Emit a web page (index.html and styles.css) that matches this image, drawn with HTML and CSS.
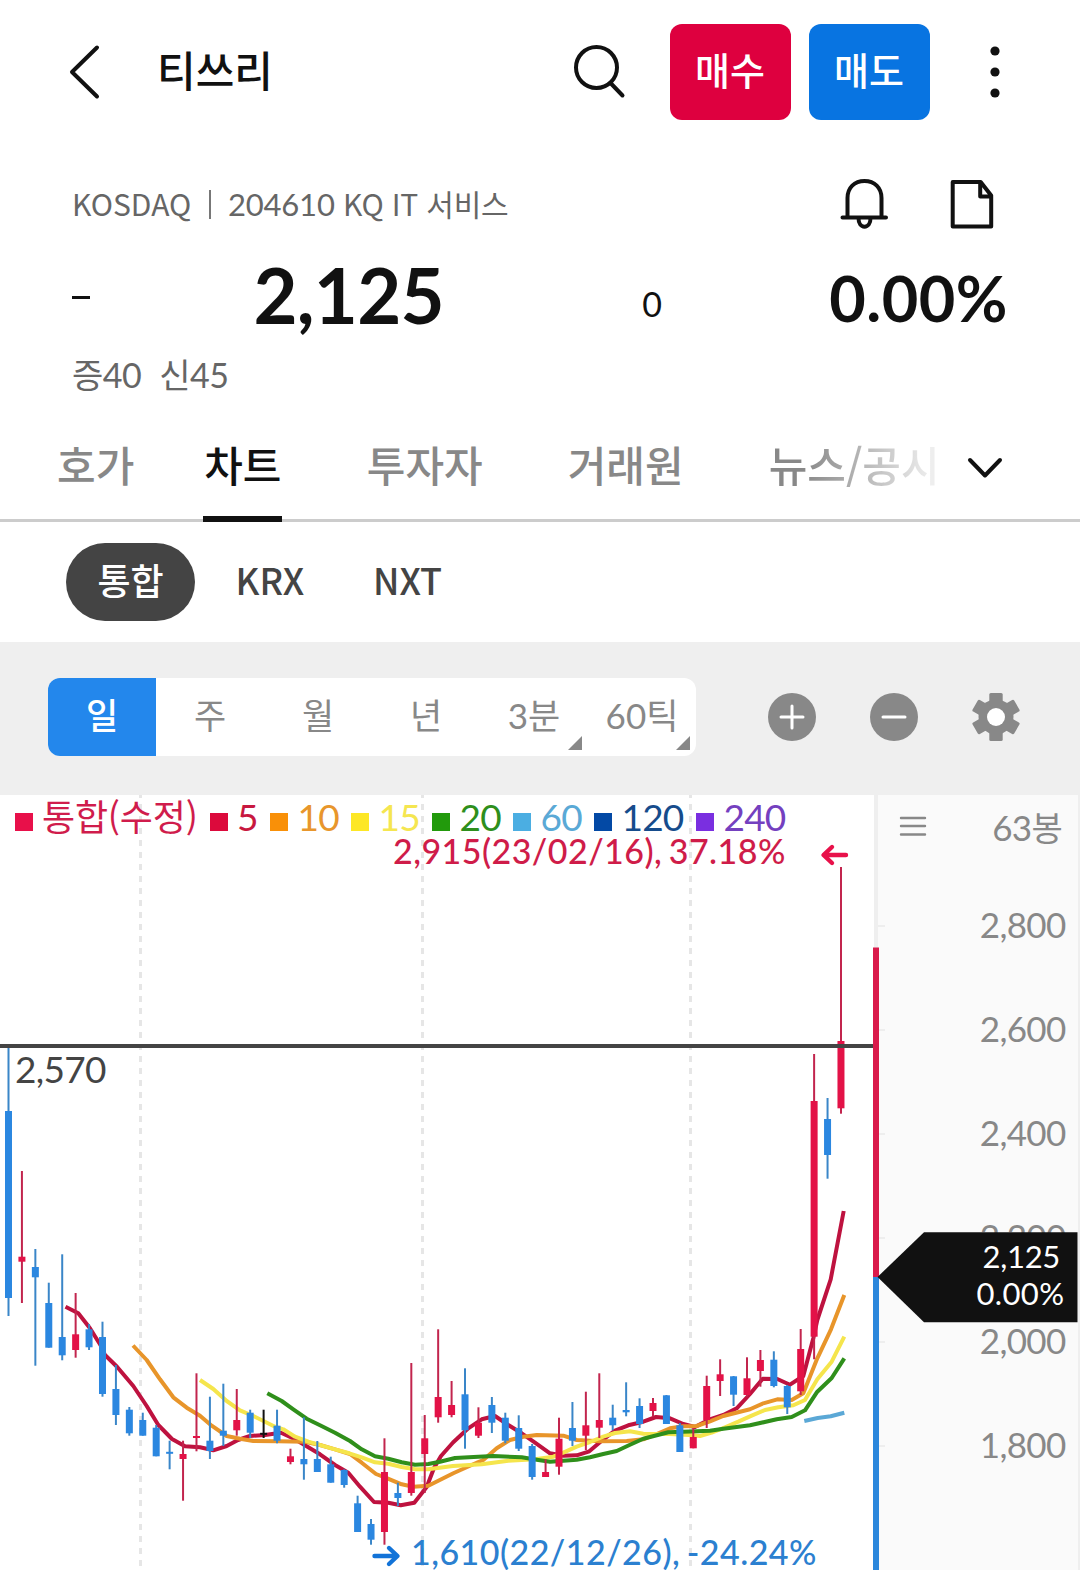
FILE: index.html
```html
<!DOCTYPE html>
<html lang="ko">
    <head>
        <title>티쓰리</title>
        <meta charset="UTF-8">
        <link rel="stylesheet" href="styles.css">
    </head>
    <body>
        <div class="header">
            <svg class="back" width="36" height="60" viewBox="66 42 36 60"><path d="M97 47.5L72 72l25 24.500"/></svg>
            <h1 class="title">티쓰리</h1>
            <svg class="search" width="56" height="60" viewBox="571 42 56 60"><ellipse cx="596.500" cy="67.500" rx="20.500" ry="20.500"/><path d="M610.500 83l12 12.500"/></svg>
            <div class="order buy">매수</div>
            <div class="order sell">매도</div>
            <svg class="more" width="12" height="60" viewBox="0 0 12 60"><circle cx="6" cy="9" r="4.600"/><circle cx="6" cy="30" r="4.600"/><circle cx="6" cy="51" r="4.600"/></svg>
        </div>

        <div class="info">
            <span class="market">KOSDAQ</span>
            <span class="divider"></span>
            <span class="code"><span class="num">204610</span> KQ IT 서비스</span>
            <svg class="bell" width="50" height="54" viewBox="839 177 50 54"><path d="M847.500 217v-19c0-10.500 7-17 17-17s17 6.500 17 17v19M842.500 217.500h43.500M858.500 218c0 5.500 2.500 8.700 6 8.700s6-3.200 6-8.700"/></svg>
            <svg class="doc" width="48" height="54" viewBox="948 177 48 54"><path d="M952.700 182h28l10.500 13.500v31h-38.500zM980.200 182v14.500h11"/></svg>
        </div>

        <div class="price-row">
            <span class="sign"></span>
            <span class="price">2,125</span>
            <span class="diff">0</span>
            <span class="rate">0.00%</span>
        </div>

        <div class="margin-row">
            <span>증<span class="num">40</span></span>
            <span>신<span class="num">45</span></span>
        </div>

        <div class="tabs">
            <div class="tab">호가</div>
            <div class="tab active">차트</div>
            <div class="tab">투자자</div>
            <div class="tab">거래원</div>
            <div class="tab fade">뉴스/공시</div>
            <svg class="expand" width="40" height="26" viewBox="0 0 40 26"><path d="M5 5l15 15.500L35 5"/></svg>
        </div>

        <div class="markets">
            <div class="pill">통합</div>
            <div class="market-item krx">KRX</div>
            <div class="market-item">NXT</div>
        </div>

        <div class="toolbar">
            <div class="periods">
                <div class="period selected">일</div>
                <div class="period">주</div>
                <div class="period">월</div>
                <div class="period">년</div>
                <div class="period more-option"><span class="num">3</span>분</div>
                <div class="period more-option"><span class="num">60</span>틱</div>
            </div>
            <svg class="tool" width="48" height="48" viewBox="0 0 48 48"><circle cx="24" cy="24" r="24"/><path d="M13 24h22M24 13v22"/></svg>
            <svg class="tool" width="48" height="48" viewBox="0 0 48 48"><circle cx="24" cy="24" r="24"/><path d="M13 24h22"/></svg>
            <svg class="tool gear" width="48" height="48" viewBox="-24 -24 48 48">
                <circle r="17.500"/>
                <rect x="-6.700" y="-24" width="13.400" height="48" rx="1.500"/>
                <rect x="-6.700" y="-24" width="13.400" height="48" rx="1.500" transform="rotate(60)"/>
                <rect x="-6.700" y="-24" width="13.400" height="48" rx="1.500" transform="rotate(120)"/>
                <circle class="hole" r="9"/>
            </svg>
        </div>

        <svg class="chart" width="1080" height="775" viewBox="0 795 1080 775">
            <rect class="axis-bg" x="878" y="795" width="202" height="775"/>
            <rect class="axis-line" x="874" y="795" width="4" height="775"/>
            <rect class="axis-line" x="1078" y="795" width="2" height="775"/>
            <path class="grid" d="M140.500 792v780M422.500 792v780M690.500 792v780"/>
            <path class="tick" d="M878 926h7M878 1030h7M878 1134h7M878 1238h7M878 1342h7M878 1446h7"/>

            <g id="averages"></g>
            <g id="candles"></g>

            <rect class="level" x="0" y="1044" width="876" height="4"/>
            <text class="level-text" x="15" y="1083">2,570</text>

            <rect class="range-up" x="873" y="947.500" width="6" height="329.500"/>
            <rect class="range-down" x="873" y="1277" width="6" height="293"/>

            <g class="legend">
                <g class="c-main"><rect x="15" y="813" width="18" height="18"/><text class="kr" x="42" y="831">통합(수정)</text></g>
                <g class="c-5"><rect x="210" y="813" width="18" height="18"/><text x="237" y="831">5</text></g>
                <g class="c-10"><rect x="270" y="813" width="18" height="18"/><text x="297.500" y="831">10</text></g>
                <g class="c-15"><rect x="351" y="813" width="18" height="18"/><text x="378.500" y="831">15</text></g>
                <g class="c-20"><rect x="432" y="813" width="18" height="18"/><text x="459.500" y="831">20</text></g>
                <g class="c-60"><rect x="513" y="813" width="18" height="18"/><text x="540.500" y="831">60</text></g>
                <g class="c-120"><rect x="594" y="813" width="18" height="18"/><text x="621.500" y="831">120</text></g>
                <g class="c-240"><rect x="696" y="813" width="18" height="18"/><text x="723.500" y="831">240</text></g>
            </g>

            <text class="peak high" x="393" y="864">2,915(23/02/16), 37.18%</text>
            <path class="arrow high" d="M846 855h-22M832 847l-8.500 8 8.500 8"/>
            <text class="peak low" x="411" y="1565">1,610(22/12/26), -24.24%</text>
            <path class="arrow low" d="M374.500 1556h22M389 1548l8.500 8-8.500 8"/>

            <path class="menu" d="M901 818h24M901 826h24M901 834.500h24"/>
            <g class="axis">
                <text x="1062" y="840.500"><tspan>63</tspan><tspan class="kr">봉</tspan></text>
                <text x="1065.500" y="938">2,800</text>
                <text x="1065.500" y="1042">2,600</text>
                <text x="1065.500" y="1146">2,400</text>
                <text x="1065.500" y="1250">2,200</text>
                <text x="1065.500" y="1354">2,000</text>
                <text x="1065.500" y="1458">1,800</text>
            </g>

            <path class="tag" d="M877.500 1277L924 1232.300h153.500v90H924z"/>
            <text class="tag-text" x="1060" y="1268">2,125</text>
            <text class="tag-text percent" x="1064.500" y="1304.500">0.00%</text>
        </svg>

        <script src="chart.js"></script>
    </body>
</html>
```
FILE: styles.css
```css
body {
    margin: 0;
    width: 1080px;
    height: 1570px;
    overflow: hidden;
    background: #fff;
    color: #111;
    font-family: "Noto Sans CJK KR", sans-serif;
}

svg {
    display: block;
    flex: none;
}

.num, .price, .diff, .rate {
    font-family: Lato, "Noto Sans CJK KR", sans-serif;
}

/* header */
.header {
    display: flex;
    align-items: center;
    height: 144px;
    box-sizing: border-box;
    padding-left: 66px;
}

.back path, .search ellipse, .search path, .bell path, .doc path, .expand path {
    fill: none;
    stroke: #111;
    stroke-width: 4;
    stroke-linecap: round;
    stroke-linejoin: round;
}

.title {
    margin: -7px 0 0 55px;
    width: 414px;
    font-size: 42px;
    line-height: 60px;
    font-weight: 500;
}

.order {
    width: 120px;
    height: 96px;
    margin-right: 18px;
    padding-right: 1px;
    border-radius: 12px;
    color: #fff;
    font-size: 38px;
    font-weight: 500;
    line-height: 90px;
    text-align: center;
}

.buy {
    margin-left: 43px;
    background: #de003f;
}

.sell {
    background: #0874e1;
}

.more {
    margin-left: 40.5px;
    fill: #111;
}

/* stock info */
.info {
    display: flex;
    align-items: center;
    height: 120px;
    padding-left: 72px;
    color: #666;
    font-size: 30px;
    line-height: 46px;
}

.info .num {
    font-size: 31px;
}

.market {
    width: 137px;
}

.divider {
    width: 2px;
    height: 29px;
    margin-right: 17px;
    background: #777;
}

.market, .code {
    margin-top: -2px;
}

.code {
    width: 611px;
    letter-spacing: -0.2px;
}

.doc {
    margin-left: 59px;
}

.price-row {
    display: flex;
    align-items: flex-start;
    height: 84px;
    padding-left: 72px;
}

.sign {
    width: 18px;
    height: 3px;
    margin-top: 32px;
    background: #111;
}

.price {
    width: 354px;
    text-align: right;
    font-size: 76px;
    line-height: 62px;
    font-weight: 700;
    letter-spacing: -0.7px;
}

.diff {
    width: 218px;
    text-align: right;
    font-size: 34px;
    line-height: 79px;
}

.rate {
    width: 346px;
    text-align: right;
    font-size: 63px;
    line-height: 67px;
    font-weight: 700;
    letter-spacing: 0.5px;
}

.margin-row {
    display: flex;
    gap: 18px;
    height: 72px;
    padding-left: 72px;
    color: #666;
    font-size: 34px;
    line-height: 52px;
    letter-spacing: -0.5px;
}

/* tabs */
.tabs {
    display: flex;
    height: 99px;
    border-bottom: 3px solid #ccc;
    padding-left: 57px;
}

.tab {
    height: 96px;
    margin-right: 85px;
    color: #888;
    font-size: 42px;
    font-weight: 500;
    line-height: 88px;
    white-space: nowrap;
}

.tab:first-child {
    margin-right: 69px;
}

.tab.active {
    width: 79px;
    margin-right: 84.5px;
    border-bottom: 6px solid #111;
    color: #111;
    text-align: center;
}

.tab.fade {
    margin-right: 25px;
    color: transparent;
    background: linear-gradient(90deg, #888 20%, #eee 95%);
    -webkit-background-clip: text;
    background-clip: text;
}

.expand {
    margin-top: 35px;
}

/* exchanges */
.markets {
    display: flex;
    align-items: center;
    height: 120px;
    padding-left: 66px;
    color: #444;
    font-size: 36px;
    font-weight: 500;
}

.pill {
    width: 129px;
    height: 78px;
    margin-right: 40.5px;
    border-radius: 39px;
    background: #444;
    color: #fff;
    line-height: 72px;
    text-align: center;
}

.market-item {
    padding-bottom: 6px;
}

.krx {
    width: 137.5px;
}

/* chart toolbar */
.toolbar {
    display: flex;
    align-items: center;
    height: 153px;
    box-sizing: border-box;
    padding: 0 0 3px 48px;
    background: #efefef;
}

.periods {
    display: flex;
    width: 648px;
    height: 78px;
    margin-right: 18px;
    overflow: hidden;
    border-radius: 12px;
    background: #fff;
}

.period {
    position: relative;
    width: 108px;
    color: #888;
    font-size: 35px;
    line-height: 72px;
    text-align: center;
}

.period.selected {
    background: #2387ec;
    color: #fff;
    font-weight: 500;
}

.more-option:after {
    content: "";
    position: absolute;
    right: 6px;
    bottom: 6px;
    border-left: 14px solid transparent;
    border-bottom: 14px solid #888;
}

.tool {
    margin-left: 54px;
    fill: #888;
}

.tool path {
    stroke: #fff;
    stroke-width: 3;
    stroke-linecap: round;
}

.tool .hole {
    fill: #fff;
}

/* chart */
.chart text {
    font-family: Lato, "Noto Sans CJK KR", sans-serif;
}

.chart .kr {
    font-family: "Noto Sans CJK KR", sans-serif;
}

.axis-bg { fill: #fafafa; }
.axis-line { fill: #efefef; }

.grid {
    stroke: #e6e6e6;
    stroke-width: 3;
    stroke-dasharray: 6 6;
}

.tick {
    stroke: #eee;
    stroke-width: 2;
}

.level { fill: #444; }

.level-text {
    fill: #444;
    font-size: 37px;
    letter-spacing: -0.7px;
}

.range-up { fill: #d91a4b; }
.range-down { fill: #2b87dc; }

.legend {
    font-size: 37px;
    letter-spacing: -0.8px;
}

.legend .kr {
    font-size: 36px;
    letter-spacing: -0.2px;
}

.c-main { fill: #e8104a; }
.c-5 { fill: #dc0a3c; }
.c-10 { fill: #f99008; }
.c-15 { fill: #fde725; }
.c-20 { fill: #229a0c; }
.c-60 { fill: #4baee2; }
.c-120 { fill: #0349a5; }
.c-240 { fill: #7a2fe0; }

.c-main text { fill: #d01c4c; }
.c-5 text { fill: #c8183f; }
.c-10 text { fill: #e8962c; }
.c-15 text { fill: #f5e650; }
.c-20 text { fill: #2e8f1c; }
.c-60 text { fill: #5aa9d6; }
.c-120 text { fill: #164c8c; }
.c-240 text { fill: #7440bf; }

.peak {
    font-size: 34px;
    font-weight: 500;
    letter-spacing: 0.45px;
    word-spacing: -2.5px;
}

.peak.high { fill: #cf1c49; }
.peak.low { fill: #2b80d0; }

.arrow {
    fill: none;
    stroke-width: 4.4;
    stroke-linecap: round;
    stroke-linejoin: round;
}

.arrow.high { stroke: #e8114a; }
.arrow.low { stroke: #1273d8; }

.menu {
    stroke: #888;
    stroke-width: 2.4;
    stroke-linecap: round;
}

.axis {
    fill: #888;
    font-size: 35px;
    letter-spacing: -0.7px;
    text-anchor: end;
}

.axis .kr {
    font-size: 34px;
}

.tag { fill: #111; }

.tag-text {
    fill: #fff;
    font-size: 31px;
    letter-spacing: -0.3px;
    text-anchor: end;
}

.tag-text.percent {
    letter-spacing: 0.4px;
}

.candle.up { fill: #e31247; stroke: #c2254e; }
.candle.down { fill: #2b87e0; stroke: #3a86c8; }
.candle.flat { fill: #111; stroke: #111; }
.candle rect { stroke: none; }
.candle path { stroke-width: 2; }

.average {
    fill: none;
    stroke-width: 4;
    stroke-linejoin: round;
}

.ma5 { stroke: #be123f; }
.ma10 { stroke: #e8952a; }
.ma15 { stroke: #f5e54c; }
.ma20 { stroke: #2f8f1b; }
.ma60 { stroke: #5ba8d6; }
```
FILE: chart.js
```js
// [type, high, body top, body bottom, low]
var candles = [
    ['down', 1048, 1111, 1298, 1316],
    ['up', 1171, 1256.7, 1261.7, 1303],
    ['down', 1249, 1267, 1277.3, 1365.7],
    ['down', 1282.7, 1303, 1347.7, 1347.7],
    ['down', 1254.3, 1337, 1355.3, 1360.3],
    ['up', 1293, 1334.3, 1350, 1357.7],
    ['down', 1324, 1329.3, 1347.3, 1350],
    ['down', 1321.7, 1337, 1394, 1396.7],
    ['down', 1365, 1389, 1415, 1425],
    ['down', 1407, 1409.7, 1433.3, 1435.7],
    ['down', 1412.7, 1420, 1435.7, 1435.7],
    ['down', 1425, 1427.7, 1456.3, 1456.3],
    ['down', 1440.7, 1451.8, 1453.8, 1469.3],
    ['up', 1440.7, 1454, 1459, 1500.7],
    ['up', 1373.3, 1436, 1438, 1451.3],
    ['down', 1396.7, 1440.7, 1451, 1459],
    ['down', 1383.7, 1430.7, 1435.7, 1446],
    ['up', 1389, 1420, 1430.3, 1435.7],
    ['down', 1409.7, 1412.7, 1432.7, 1438],
    ['flat', 1409.7, 1432.8, 1434.8, 1438],
    ['down', 1409.7, 1425.7, 1440.7, 1443.3],
    ['up', 1448.7, 1456.3, 1462, 1464.3],
    ['down', 1417.3, 1459, 1464.3, 1479.7],
    ['down', 1441, 1459, 1472, 1472],
    ['down', 1456.7, 1464.3, 1482.7, 1482.7],
    ['down', 1469.3, 1470, 1485, 1487.7],
    ['down', 1495.7, 1503.3, 1532, 1532],
    ['down', 1519, 1524, 1539.7, 1544.7],
    ['up', 1438.3, 1472, 1532, 1544.7],
    ['down', 1482.7, 1493, 1498, 1506],
    ['up', 1363, 1472, 1493, 1495.7],
    ['up', 1415, 1438.3, 1454, 1493],
    ['up', 1329.3, 1397, 1417.3, 1422.7],
    ['up', 1381, 1405, 1415, 1417.3],
    ['down', 1368.3, 1394.3, 1430.3, 1448.7],
    ['up', 1407.3, 1422.7, 1435.7, 1438],
    ['down', 1397, 1405, 1422.7, 1433],
    ['down', 1412.7, 1417.7, 1440.7, 1443.3],
    ['down', 1415.3, 1428, 1448.7, 1451],
    ['down', 1444, 1446, 1477, 1479.7],
    ['up', 1459.3, 1472, 1477, 1477],
    ['up', 1417.7, 1438.7, 1466.7, 1474.7],
    ['down', 1402, 1428, 1440.7, 1446],
    ['up', 1391.7, 1425.3, 1435.7, 1450],
    ['up', 1373.3, 1420, 1427.7, 1438],
    ['down', 1404.7, 1417.7, 1425.3, 1430.3],
    ['down', 1382.3, 1410, 1412.3, 1416.3],
    ['down', 1398.3, 1406, 1424, 1428],
    ['up', 1398, 1403, 1411, 1416.7],
    ['down', 1395, 1395.3, 1424, 1424],
    ['down', 1423, 1425.3, 1452, 1452],
    ['up', 1428, 1437, 1448.3, 1448.3],
    ['up', 1375.7, 1386, 1420, 1428],
    ['up', 1359.3, 1374.3, 1381, 1396],
    ['down', 1376, 1376.3, 1394.7, 1406],
    ['up', 1357.3, 1378.3, 1395, 1396.5],
    ['up', 1350, 1360, 1371, 1386.7],
    ['down', 1351.3, 1359.7, 1386, 1387.3],
    ['down', 1385, 1386, 1407.3, 1414],
    ['up', 1329, 1349, 1391.3, 1395],
    ['up', 1054, 1101, 1336.7, 1359.3],
    ['down', 1098, 1119, 1155, 1178.7],
    ['up', 867, 1041, 1108.3, 1113.7]
];

// moving average lines
var averages = {
    ma60: '804.3,1421 817.7,1418 830.7,1416.3 844.3,1412.7',
    ma5: '65.5,1306.8 78.3,1313.3 90,1328.3 101,1346 105,1355 117,1366.7 133.3,1386 146.7,1406 158.3,1425 172,1439 185,1446.3 200,1447.3 213.3,1450.3 226.7,1446 238,1440 250,1436 265,1435 281,1432.7 295,1439.3 308.3,1447.3 320,1454.3 335,1465 348.3,1472.7 360,1486.7 374,1502 388.3,1502.7 400.7,1505.3 414.3,1502.7 426.7,1487 434,1468 441,1456 453,1442.5 468.3,1428.3 481.7,1419.3 495,1416 508.3,1425 521.7,1433.3 535,1442.7 550,1453.3 563.3,1455.7 576.7,1455.3 589.3,1451.3 601.7,1440.7 615,1430.7 628.3,1425.3 643.3,1421.7 656,1417 670,1418.3 683.3,1424 695,1427 708.3,1420 723.3,1415 736.7,1408.3 750,1394 762.7,1378.7 777.3,1379 790,1384.7 803.3,1376 813.3,1338.3 817.3,1320 830.7,1279.3 843.7,1211',
    ma10: '133,1345.5 146.7,1360 160,1379.3 173.3,1397.3 186.7,1407.7 200,1415.7 211.7,1425.7 226.7,1436 240,1438.7 253.3,1441 278.3,1441.3 305,1441.7 320,1445 335,1449.3 350,1454 361.7,1462.7 376,1474 387.3,1478.3 401.7,1484.3 413.3,1486.7 428.3,1485.7 453.3,1473.3 478.3,1462 483.3,1460 496.7,1448.3 510,1440 523.3,1436.7 536.7,1435 563.3,1435.7 576.7,1440 600,1441.3 626.7,1441 643.3,1439.3 656.7,1434 670,1428.3 683.3,1426.3 696.7,1426 710,1421.3 723.3,1416 750,1409.3 763.3,1403.3 777.3,1399.3 791.7,1400 803.3,1393.3 817.3,1358.3 831,1329.3 844.3,1295',
    ma15: '200,1380 213.3,1389 226.7,1401 240,1410.3 253.3,1416 275,1426.7 283.3,1429.3 295,1436.7 308.3,1441.7 335,1449.3 349.3,1453.3 361.7,1457.3 375,1462.3 388.3,1463.7 401.7,1467 415,1469.3 428,1469.3 453,1466 481.7,1464.3 508.3,1460.7 535,1459.3 553.3,1456.7 563.3,1452.7 576.7,1446.7 590,1442 603.3,1436.7 615,1433 630,1431.3 643.3,1433.7 670,1434 693.3,1435.3 700,1436 711.7,1432.7 725,1427.3 738.3,1421.7 751.7,1415.7 765,1410 778.3,1407.3 793.3,1405.3 805,1400 817.3,1379.3 831.7,1361.7 844.3,1336.7',
    ma20: '267.3,1393.3 281.7,1401 293.3,1409.3 306.7,1418.7 320,1425.3 335,1432.7 350,1441 361.7,1449.3 375,1456.3 388.3,1458.7 401.7,1462.3 415,1464.7 428.3,1464 440,1461.7 455,1458 478.3,1456.7 493.3,1456 521.7,1457.3 538.3,1460 550,1461.7 576.7,1459.7 590,1457.3 603.3,1454 616.7,1451 630,1444.7 643.3,1438.7 668.3,1432.3 696.7,1431.3 710,1430.7 723.3,1428.7 750,1425.3 776.7,1419.3 791.7,1417 805,1410.3 817.3,1391.7 831.7,1378 844.3,1358.3'
};

var html = '';
for (var name in averages) {
    html += '<polyline class="average ' + name + '" points="' + averages[name] + '"/>';
}
document.getElementById('averages').innerHTML = html;

html = '';
for (var i = 0; i < candles.length; i++) {
    var c = candles[i];
    var x = 8.5 + i * 13.427;
    html += '<g class="candle ' + c[0] + '">' +
            '<path d="M' + x + ' ' + c[1] + 'V' + c[4] + '"/>' +
            '<rect x="' + (x - 3.5) + '" y="' + c[2] + '" width="7" height="' + (c[3] - c[2]) + '"/>' +
            '</g>';
}
document.getElementById('candles').innerHTML = html;
```
